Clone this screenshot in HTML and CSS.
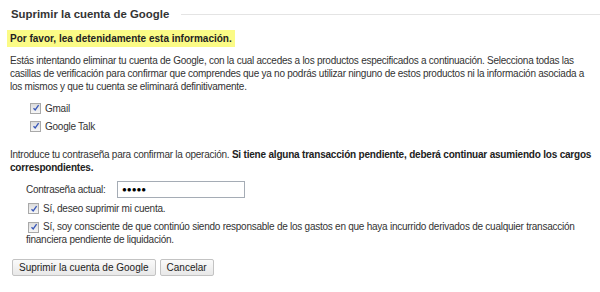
FILE: index.html
```html
<!DOCTYPE html>
<html>
<head>
    <meta charset="UTF-8">
    <title>Suprimir la cuenta de Google</title>
    <link rel="stylesheet" href="styles.css">
</head>
<body>
<div class="page">
    <div class="head">
        <h1>Suprimir la cuenta de Google</h1>
        <div class="rule"></div>
    </div>
    <p class="warn">Por favor, lea detenidamente esta información.</p>
    <p class="intro">Estás intentando eliminar tu cuenta de Google, con la cual accedes a los productos especificados a continuación. Selecciona todas las casillas de verificación para confirmar que comprendes que ya no podrás utilizar ninguno de estos productos ni la información asociada a los mismos y que tu cuenta se eliminará definitivamente.</p>
    <ul class="products">
        <li><span class="cb"><svg width="8" height="8" viewBox="0 0 8 8"><path d="M1.5 4.2 L3.2 6 L6.6 1.2" fill="none" stroke="#3857b8" stroke-width="1.3"/></svg></span>Gmail</li>
        <li><span class="cb"><svg width="8" height="8" viewBox="0 0 8 8"><path d="M1.5 4.2 L3.2 6 L6.6 1.2" fill="none" stroke="#3857b8" stroke-width="1.3"/></svg></span>Google Talk</li>
    </ul>
    <p class="pwd-note">Introduce tu contraseña para confirmar la operación. <b>Si tiene alguna transacción pendiente, deberá continuar asumiendo los cargos correspondientes.</b></p>
    <div class="confirm">
        <div class="pwd-row">
            <label>Contraseña actual:</label>
            <div class="pwd-box">●●●●●</div>
        </div>
        <div class="chk"><span class="cb"><svg width="8" height="8" viewBox="0 0 8 8"><path d="M1.5 4.2 L3.2 6 L6.6 1.2" fill="none" stroke="#3857b8" stroke-width="1.3"/></svg></span>Sí, deseo suprimir mi cuenta.</div>
        <div class="chk wrap"><span class="cb"><svg width="8" height="8" viewBox="0 0 8 8"><path d="M1.5 4.2 L3.2 6 L6.6 1.2" fill="none" stroke="#3857b8" stroke-width="1.3"/></svg></span>Sí, soy consciente de que continúo siendo responsable de los gastos en que haya incurrido derivados de cualquier transacción financiera pendiente de liquidación.</div>
    </div>
    <div class="buttons">
        <button class="btn">Suprimir la cuenta de Google</button>
        <button class="btn">Cancelar</button>
    </div>
</div>
</body>
</html>
```

FILE: styles.css
```css
*{margin:0;padding:0;}
body{
    background:#fff;
    font-family:"Liberation Sans",Arial,sans-serif;
    font-size:10px;
    letter-spacing:-0.25px;
    color:#333;
}
ul,li{list-style:none;}
.page{
    padding:6px 0 0 10px;
    width:590px;
}
.head{
    display:flex;
    align-items:center;
    height:16px;
}
.head h1{
    font-size:11.4px;
    font-weight:bold;
    letter-spacing:0;
    color:#333;
    padding-left:1px;
    white-space:nowrap;
}
.rule{
    flex:1;
    border-top:1px solid #e4e4e4;
    margin-left:12px;
}
.warn{
    display:inline-block;
    margin:8px 0 0 -3px;
    padding:0 3px;
    height:17px;
    line-height:17px;
    background:#fbfb86;
    font-weight:bold;
    letter-spacing:0;
    color:#222;
}
.intro{
    margin-top:7px;
    line-height:13px;
    width:582px;
}
.products{
    margin:6px 0 0 20px;
}
.products li{
    display:flex;
    align-items:center;
    height:18px;
}
.cb{
    display:inline-flex;
    align-items:center;
    justify-content:center;
    width:9px;
    height:9px;
    border:1px solid #a9a9a9;
    background:linear-gradient(#dcdcdc,#f6f6f6);
    margin-right:4px;
    flex:none;
}
.pwd-note{
    margin-top:13px;
    line-height:13px;
}
.pwd-note b{
    color:#222;
    letter-spacing:-0.2px;
}
.confirm{
    margin:7px 0 0 16px;
}
.pwd-row{
    display:flex;
    align-items:center;
    height:17px;
}
.pwd-row label{
    width:91px;
    flex:none;
    white-space:nowrap;
}
.pwd-box{
    width:122px;
    height:15px;
    border:1px solid #a5acb5;
    padding-left:4px;
    line-height:15px;
    font-size:8px;
    letter-spacing:0;
    color:#000;
}
.chk{
    display:flex;
    align-items:center;
    margin:3px 0 0 2px;
    height:15px;
}
.chk.wrap{
    display:block;
    height:auto;
    margin:4px 0 0 0;
    line-height:13px;
}
.chk.wrap .cb{
    margin-left:2px;
    vertical-align:-1px;
}
.buttons{
    display:flex;
    gap:4px;
    margin-top:13px;
    margin-left:2px;
}
.btn{
    font-family:"Liberation Sans",Arial,sans-serif;
    font-size:10px;
    letter-spacing:0;
    color:#222;
    height:17px;
    padding:0 6px;
    border:1px solid #c3c3c3;
    border-radius:2px;
    background:linear-gradient(#fafafa,#e8e8e8);
}
```
